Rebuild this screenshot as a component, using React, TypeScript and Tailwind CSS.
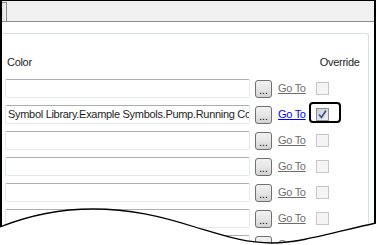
import React from 'react';

const rows = [
  { value: '', active: false },
  { value: 'Symbol Library.Example Symbols.Pump.Running Color', active: true },
  { value: '', active: false },
  { value: '', active: false },
  { value: '', active: false },
  { value: '', active: false },
  { value: '', active: false },
];

const CheckBox: React.FC<{ checked?: boolean }> = ({ checked }) => (
  <div
    className={`w-[13px] h-[13px] border flex items-center justify-center ${
      checked
        ? 'border-[#8e8f8f] bg-gradient-to-br from-[#c9ced8] to-[#eef0f4]'
        : 'border-[#c6c6c6] bg-[#f4f4f4]'
    }`}
  >
    {checked && (
      <svg width="9" height="9" viewBox="0 0 9 9">
        <path d="M1 4.5 L3.5 7.5 L8 0.5" fill="none" stroke="#3b4f8f" strokeWidth="1.6" />
      </svg>
    )}
  </div>
);

const App: React.FC = () => {
  return (
    <div className="relative w-[376px] h-[245px] overflow-hidden bg-white font-['Liberation_Sans',Arial,sans-serif] text-[11px] leading-[13px] tracking-[-0.3px] text-[#1e1e1e]">
      <div className="h-[245px] border-l-2 border-r-2 border-t border-black flex flex-col">
        {/* Tab strip */}
        <div className="h-[21px] shrink-0 bg-[#f0f0f0] border-b border-[#8c8c8c] flex items-end">
          <div className="w-[5px] h-[19px] border-t border-r border-[#8c8c8c] bg-gradient-to-r from-[#d8e4e0] to-[#f4f4f4]" />
        </div>

        {/* Group box */}
        <div className="flex-1 pt-[11px] pr-[5px]">
          <div className="h-full border-t border-r border-[#d5dfe5] rounded-tr-[3px] pl-[3px] pt-[22px]">
            <div className="flex h-[13px]">
              <span className="ml-[2px]">Color</span>
              <span className="ml-[288px]">Override</span>
            </div>

            <div className="mt-[10px] flex flex-col gap-[7px]">
              {rows.map((row, i) => (
                <div key={i} className="flex items-center h-[19px]">
                  <div className="w-[245px] h-[19px] rounded-[2px] border border-[#e3e9ef] border-t-[#abadb3] bg-white overflow-hidden whitespace-nowrap pl-[2px] pt-[2px]">
                    {row.value}
                  </div>
                  <div className="ml-[5px] w-[17px] h-[18px] rounded-[3px] border border-[#707070] bg-gradient-to-b from-[#f2f2f2] via-[#e6e6e6] to-[#d2d2d2] flex items-end justify-center pb-[1px] text-[10px] leading-[10px] text-black tracking-normal">
                    ...
                  </div>
                  <span
                    className={`ml-[6px] underline ${
                      row.active ? 'text-[#0000ff]' : 'text-[#6d6d6d]'
                    }`}
                  >
                    Go To
                  </span>
                  <div className="relative ml-[10px]">
                    <CheckBox checked={row.active} />
                    {row.active && (
                      <div className="absolute -left-[7px] -top-[6px] w-[32px] h-[21px] border-2 border-black rounded-[4px]" />
                    )}
                  </div>
                </div>
              ))}
            </div>
          </div>
        </div>
      </div>

      {/* Torn bottom edge */}
      <svg className="absolute inset-0" width="376" height="245" viewBox="0 0 376 245">
        <path
          d="M0,227 C30,215 60,209 93,209 C130,209 160,216 195,227 C225,236 245,243 272,243 C300,243 335,232 376,223 L376,245 L0,245 Z"
          fill="#ffffff"
        />
        <path
          d="M0,227 C30,215 60,209 93,209 C130,209 160,216 195,227 C225,236 245,243 272,243 C300,243 335,232 376,223"
          fill="none"
          stroke="#000000"
          strokeWidth="1.3"
        />
      </svg>
    </div>
  );
};

export default App;
